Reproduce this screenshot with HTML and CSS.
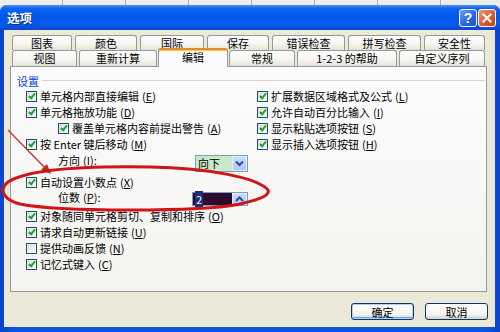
FILE: index.html
```html
<!DOCTYPE html>
<html lang="zh-CN">
<head>
<meta charset="utf-8">
<title>选项</title>
<link rel="stylesheet" href="styles.css">
</head>
<body>
<div class="screen">
  <div class="desk"></div>
  <div class="window">
    <div class="titlebar">
      <span class="title">选项</span>
      <span class="tb-btns">
        <span class="tb-btn help">?</span>
        <span class="tb-btn close"><svg width="10" height="10" viewBox="0 0 10 10"><path d="M1.5 1.5 L8.5 8.5 M8.5 1.5 L1.5 8.5" stroke="#fff" stroke-width="2" stroke-linecap="square"/></svg></span>
      </span>
    </div>
    <div class="client">
      <div class="tabs">
        <div class="tabrow back">
          <span class="tab">图表</span>
          <span class="tab">颜色</span>
          <span class="tab">国际</span>
          <span class="tab">保存</span>
          <span class="tab">错误检查</span>
          <span class="tab">拼写检查</span>
          <span class="tab">安全性</span>
        </div>
        <div class="tabrow front">
          <span class="tab">视图</span>
          <span class="tab">重新计算</span>
          <span class="tab sel">编辑</span>
          <span class="tab">常规</span>
          <span class="tab">1-2-3 的帮助</span>
          <span class="tab">自定义序列</span>
        </div>
      </div>
      <div class="panel">
        <div class="group-title"><span>设置</span><i class="rule"></i></div>
        <div class="opts">
          <div class="col-left">
            <div class="row"><span class="cb on"></span><span>单元格内部直接编辑<span class="mn">(<u>E</u>)</span></span></div>
            <div class="row"><span class="cb on"></span><span>单元格拖放功能<span class="mn">(<u>D</u>)</span></span></div>
            <div class="row indent"><span class="cb on"></span><span>覆盖单元格内容前提出警告<span class="mn">(<u>A</u>)</span></span></div>
            <div class="row"><span class="cb on"></span><span>按 Enter 键后移动<span class="mn">(<u>M</u>)</span></span></div>
            <div class="row dir">
              <span class="field-label">方向<span class="mn">(<u>I</u>)</span>:</span>
              <span class="combo"><span class="val">向下</span><span class="arrowbtn"><svg width="9" height="7" viewBox="0 0 9 7"><path d="M1 1.5 L4.5 5 L8 1.5" fill="none" stroke="#2A4DA8" stroke-width="2"/></svg></span></span>
            </div>
            <div class="row"><span class="cb on"></span><span>自动设置小数点<span class="mn">(<u>X</u>)</span></span></div>
            <div class="row spinrow">
              <span class="field-label short">位数<span class="mn">(<u>P</u>)</span>:</span>
              <span class="spin"><span class="val"><span class="hl">2</span></span><span class="arrowbtn up"><svg width="9" height="6" viewBox="0 0 9 6"><path d="M1 5 L4.5 1.5 L8 5" fill="none" stroke="#2A4DA8" stroke-width="2"/></svg></span></span>
            </div>
            <div class="row"><span class="cb on"></span><span>对象随同单元格剪切、复制和排序<span class="mn">(<u>O</u>)</span></span></div>
            <div class="row"><span class="cb on"></span><span>请求自动更新链接<span class="mn">(<u>U</u>)</span></span></div>
            <div class="row"><span class="cb"></span><span>提供动画反馈<span class="mn">(<u>N</u>)</span></span></div>
            <div class="row"><span class="cb on"></span><span>记忆式键入<span class="mn">(<u>C</u>)</span></span></div>
          </div>
          <div class="col-right">
            <div class="row"><span class="cb on"></span><span>扩展数据区域格式及公式<span class="mn">(<u>L</u>)</span></span></div>
            <div class="row"><span class="cb on"></span><span>允许自动百分比输入<span class="mn">(<u>I</u>)</span></span></div>
            <div class="row"><span class="cb on"></span><span>显示粘贴选项按钮<span class="mn">(<u>S</u>)</span></span></div>
            <div class="row"><span class="cb on"></span><span>显示插入选项按钮<span class="mn">(<u>H</u>)</span></span></div>
          </div>
        </div>
      </div>
      <div class="buttons">
        <button class="btn default">确定</button>
        <button class="btn">取消</button>
      </div>
    </div>
  </div>
  <svg class="annot" width="500" height="332" viewBox="0 0 500 332">
    <path d="M8 130 L48 171" stroke="#C82828" stroke-width="1.2" fill="none"/>
    <path d="M51 174 L41 170 L47 164 Z" fill="#C82828"/>
    <path d="M268 190 C258 178 210 168 150 167 C90 166 30 168 8 182 C-2 190 4 200 20 204 C60 212 200 212 240 204 C262 199 270 195 268 190 Z" fill="none" stroke="#D0141A" stroke-width="3"/>
  </svg>
</div>
</body>
</html>
```

FILE: styles.css
```css
body {
  margin: 0;
}

.screen {
  width: 500px;
  height: 332px;
  position: relative;
  overflow: hidden;
  display: flex;
  flex-direction: column;
  background: #E6E6E6;
  font-family: "Noto Sans CJK SC", "Noto Sans", sans-serif;
  font-size: 11px;
  color: #000;
}

.desk {
  height: 5px;
  flex: none;
  background: repeating-linear-gradient(90deg, #EDEDED 0 62px, #AFAFAF 62px 63px);
}

.window {
  flex: 1;
  display: flex;
  flex-direction: column;
  background: linear-gradient(90deg, #0844C8, #0A55E2 3%, #0A55E2 97%, #0844C8);
  border-radius: 7px 7px 0 0;
}

.titlebar {
  height: 25px;
  flex: none;
  display: flex;
  align-items: center;
  justify-content: space-between;
  padding: 0 4px 0 7px;
  border-radius: 7px 7px 0 0;
  background: linear-gradient(#4A95FF 0%, #0D62EE 14%, #0058EE 45%, #0A5AEA 75%, #0948CF 100%);
}

.title {
  color: #fff;
  font-weight: bold;
  font-size: 12.5px;
  text-shadow: 1px 1px 0 #0A2A8A;
}

.tb-btns {
  display: flex;
  gap: 1px;
}

.tb-btn {
  width: 18px;
  height: 18px;
  box-sizing: border-box;
  border: 1px solid #fff;
  border-radius: 3px;
  display: flex;
  align-items: center;
  justify-content: center;
}

.help {
  background: linear-gradient(135deg, #6FA0FA, #2A62E0 60%, #1E50CC);
  color: #fff;
  font: bold 14px "Liberation Sans", sans-serif;
}

.close {
  background: linear-gradient(135deg, #F09A78, #DC5A32 55%, #C63E18);
}

.client {
  flex: 1;
  margin: 0 5px 5px 4px;
  background: #ECE9D8;
  display: flex;
  flex-direction: column;
  padding-top: 5px;
}

.tabs {
  margin-left: 8px;
}

.tabrow {
  display: flex;
}

.tabrow.back {
  height: 15px;
  gap: 3px;
}

.tabrow.front {
  height: 16px;
  gap: 2px;
}

.tab {
  box-sizing: border-box;
  height: 100%;
  border: 1px solid #919B9C;
  border-bottom: none;
  border-radius: 3px 3px 0 0;
  background: linear-gradient(#FFFFFF, #F4F4F0 60%, #E4E2D8);
  display: flex;
  align-items: center;
  justify-content: center;
  line-height: 1;
  white-space: nowrap;
}

.back .tab:nth-child(1) { width: 60px; }
.back .tab:nth-child(2) { width: 62px; }
.back .tab:nth-child(3) { width: 64px; }
.back .tab:nth-child(4) { width: 62px; }
.back .tab:nth-child(5) { width: 73px; }
.back .tab:nth-child(6) { width: 73px; }
.back .tab:nth-child(7) { width: 61px; }

.front .tab:nth-child(1) { width: 65px; }
.front .tab:nth-child(2) { width: 78px; }
.front .tab:nth-child(3) { width: 70px; }
.front .tab:nth-child(4) { width: 66px; }
.front .tab:nth-child(5) { width: 100px; }
.front .tab:nth-child(6) { width: 86px; }

.tab.sel {
  position: relative;
  z-index: 1;
  height: 19px;
  align-self: flex-start;
  margin: -2px -1px 0 -1px;
  background: #FCFCFE;
  border-top: 2px solid #E68B2C;
  box-shadow: inset 0 1px 0 #FFC83C;
  padding-bottom: 2px;
}

.panel {
  margin: 0 8px 0 6px;
  height: 226px;
  box-sizing: border-box;
  border: 1px solid #919B9C;
  background: linear-gradient(#FCFCFE, #F4F3EE);
  padding-top: 6px;
}

.group-title {
  display: flex;
  align-items: center;
  gap: 3px;
  height: 15px;
  padding: 0 1px 0 6px;
  color: #0046D5;
}

.rule {
  flex: 1;
  height: 1px;
  background: #D6D3C6;
}

.opts {
  display: flex;
  padding-left: 15px;
}

.col-left {
  width: 231px;
  flex: none;
}

.row {
  display: flex;
  align-items: center;
  gap: 3px;
  height: 16px;
  white-space: nowrap;
}

.row.indent {
  padding-left: 32px;
}

.mn {
  margin-left: 3px;
}

.mn u {
  text-underline-offset: 1px;
}

.cb {
  width: 11px;
  height: 11px;
  flex: none;
  box-sizing: border-box;
  border: 1px solid #1C5180;
  background: linear-gradient(135deg, #DCDCD7, #FFFFFF);
  position: relative;
}

.cb.on::after {
  content: "";
  position: absolute;
  left: 2.5px;
  top: 0;
  width: 2px;
  height: 5px;
  border: solid #21A121;
  border-width: 0 2px 2px 0;
  transform: rotate(40deg);
}

.row.dir {
  height: 22px;
  align-items: flex-start;
  gap: 0;
}

.field-label {
  width: 169px;
  flex: none;
  box-sizing: border-box;
  padding-left: 32px;
  line-height: 16px;
}

.field-label.short {
  width: 166px;
  line-height: 15px;
}

.combo {
  display: flex;
  width: 53px;
  height: 17px;
  margin-top: 3px;
  box-sizing: border-box;
  border: 1px solid #7F9DB9;
  background: #C8E9C8;
}

.val {
  flex: 1;
  padding-left: 2px;
  line-height: 15px;
}

.arrowbtn {
  width: 15px;
  flex: none;
  box-sizing: border-box;
  border: 1px solid #E6EEFC;
  background: linear-gradient(#CCDBFB, #B4C8F4);
  display: flex;
  align-items: center;
  justify-content: center;
}

.row.spinrow {
  height: 18px;
  align-items: flex-start;
  gap: 0;
}

.spin {
  display: flex;
  width: 56px;
  height: 14px;
  margin-top: 2px;
  box-sizing: border-box;
  border: 1px solid #7F9DB9;
  background: #2B0A2B;
}

.spin .val {
  line-height: 12px;
}

.hl {
  background: #1B2F78;
  color: #fff;
  padding: 0 1px;
}

.buttons {
  display: flex;
  justify-content: flex-end;
  gap: 11px;
  margin: 11px 7px 0 0;
}

.btn {
  width: 63px;
  height: 17px;
  box-sizing: border-box;
  padding: 0;
  border: 1px solid #003C74;
  border-radius: 3px;
  background: linear-gradient(#FFFFFF, #F4F4F0 70%, #D6D0C5);
  font: 11px "Noto Sans CJK SC", sans-serif;
  color: #000;
  display: flex;
  align-items: center;
  justify-content: center;
}

.btn.default {
  box-shadow: inset 0 0 0 1px #B6CEF4, inset 0 -1px 0 1px #7FA2E6;
}

.annot {
  position: absolute;
  left: 0;
  top: 0;
  pointer-events: none;
}
```
